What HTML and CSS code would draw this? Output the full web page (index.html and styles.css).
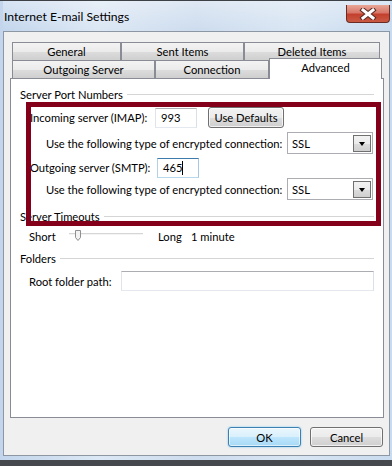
FILE: index.html
```html
<!DOCTYPE html>
<html>
<head>
    <title>Internet E-mail Settings</title>
    <link rel="stylesheet" href="styles.css">
</head>
<body>
    <div class="window">
        <div class="titlebar">
            <span class="title">Internet E-mail Settings</span>
            <span class="close-button">
                <svg width="18" height="12" viewBox="0 0 18 12">
                    <path d="M4 2 L14 10 M14 2 L4 10" stroke="#5a2a24" stroke-width="5" stroke-linecap="square"/>
                    <path d="M4 2 L14 10 M14 2 L4 10" stroke="#ffffff" stroke-width="3" stroke-linecap="square"/>
                </svg>
            </span>
        </div>
        <div class="client">
            <div class="tabs">
                <div class="tab-row">
                    <div class="tab tab-general">General</div>
                    <div class="tab tab-sent">Sent Items</div>
                    <div class="tab tab-deleted">Deleted Items</div>
                </div>
                <div class="tab-row front-row">
                    <div class="tab tab-outgoing">Outgoing Server</div>
                    <div class="tab tab-connection">Connection</div>
                    <div class="tab tab-advanced selected">Advanced</div>
                </div>
            </div>

            <div class="panel">
                <div class="group-title first"><span>Server Port Numbers</span></div>

                <div class="row row-incoming">
                    <span class="label label-incoming">Incoming server (IMAP):</span>
                    <span class="textbox port">993</span>
                    <span class="button defaults-button">Use Defaults</span>
                </div>
                <div class="row row-encrypt first-encrypt">
                    <span class="label label-encrypt">Use the following type of encrypted connection:</span>
                    <span class="combo">
                        <span class="combo-text">SSL</span>
                        <span class="combo-arrow"></span>
                    </span>
                </div>
                <div class="row row-outgoing">
                    <span class="label label-outgoing">Outgoing server (SMTP):</span>
                    <span class="textbox port focused">465<span class="caret"></span></span>
                </div>
                <div class="row row-encrypt">
                    <span class="label label-encrypt">Use the following type of encrypted connection:</span>
                    <span class="combo">
                        <span class="combo-text">SSL</span>
                        <span class="combo-arrow"></span>
                    </span>
                </div>

                <div class="group-title timeouts-title"><span>Server Timeouts</span></div>
                <div class="row row-timeout">
                    <span class="label label-short">Short</span>
                    <span class="slider">
                        <svg width="74" height="12" viewBox="0 0 74 12">
                            <rect x="0" y="3" width="74" height="2" fill="#d6d6d6"/>
                            <rect x="0" y="4" width="74" height="1" fill="#f4f4f4"/>
                            <path d="M6.5 0.5 H11.5 V7.5 L9 10.5 L6.5 7.5 Z" fill="#f2f2f2" stroke="#8f8f8f"/>
                        </svg>
                    </span>
                    <span class="label label-long">Long</span>
                    <span class="label">1 minute</span>
                </div>

                <div class="group-title folders-title"><span>Folders</span></div>
                <div class="row row-folder">
                    <span class="label label-root">Root folder path:</span>
                    <span class="textbox path"></span>
                </div>

                <div class="highlight"></div>
            </div>

            <div class="buttons">
                <span class="button ok-button">OK</span>
                <span class="button">Cancel</span>
            </div>
        </div>
    </div>
</body>
</html>
```

FILE: styles.css
```css
body {
    margin: 0;
    width: 392px;
    height: 466px;
    overflow: hidden;
    font-family: Lato, "Liberation Sans", sans-serif;
    font-size: 11.2px;
    color: #000;
    background: #45484d;
}
.window {
    height: 460px;
    box-sizing: border-box;
    display: flex;
    flex-direction: column;
    padding: 0 2px 4px 3px;
    border-top: 1px solid #3d4146;
    background: linear-gradient(to right, #c2d5ec 0%, #dbe7f4 25%, #cddcee 50%, #d8e5f3 75%, #c9dbef 100%);
}
.titlebar {
    height: 30px;
    display: flex;
    align-items: flex-start;
    background: linear-gradient(to bottom, rgba(255,255,255,0.35), rgba(255,255,255,0));
}
.title {
    padding-left: 1px;
    line-height: 32px;
    font-size: 12.2px;
}
.close-button {
    margin-left: auto;
    margin-top: 4px;
    width: 44px;
    height: 18px;
    box-sizing: border-box;
    display: flex;
    align-items: center;
    justify-content: center;
    border: 1px solid #6b2b22;
    border-top: none;
    border-radius: 0 0 4px 4px;
    background: linear-gradient(to bottom, #e8a696 0%, #d7786a 45%, #c4402e 55%, #c85a44 100%);
}
.client {
    flex: 1;
    display: flex;
    flex-direction: column;
    border: 1px solid #8d97a3;
    background-color: #f0f0f0;
    padding: 10px 5px 8px 6px;
}
.tabs {
    margin-left: 2px;
}
.tab-row {
    display: flex;
    height: 18px;
}
.front-row {
    align-items: flex-end;
}
.tab {
    height: 18px;
    box-sizing: border-box;
    border: 1px solid #898c95;
    border-bottom: none;
    text-align: center;
    line-height: 18px;
    background: linear-gradient(to bottom, #f3f3f3 0%, #ebebeb 50%, #dddddd 50%, #cfcfcf 100%);
}
.tab-general { width: 109px; }
.tab-sent { width: 123px; }
.tab-deleted { width: 136px; }
.tab-outgoing { width: 143px; }
.tab-connection { width: 114px; }
.tab-advanced { width: 113px; }
.tab.selected {
    position: relative;
    z-index: 2;
    height: 21px;
    margin-bottom: -1px;
    background: #fff;
    line-height: 17px;
}
.panel {
    flex: 1;
    position: relative;
    background: #fff;
    border: 1px solid #898c95;
    padding: 7px 9px 0 9px;
}
.group-title {
    display: flex;
    align-items: center;
    height: 16px;
}
.group-title::after {
    content: "";
    flex: 1;
    height: 1px;
    margin-left: 4px;
    background-color: #d5d5d5;
}
.timeouts-title { margin-top: 8px; }
.folders-title { margin-top: 6px; }
.row {
    display: flex;
    align-items: center;
    white-space: nowrap;
}
.row-incoming {
    height: 21px;
    margin-top: 5px;
    padding-left: 10px;
}
.row-outgoing {
    height: 21px;
    margin-top: 3px;
    padding-left: 10px;
}
.row-encrypt {
    height: 22px;
    padding-left: 26px;
}
.first-encrypt { margin-top: 4px; }
.row-timeout {
    height: 16px;
    margin-top: 4px;
    padding-left: 9px;
}
.row-folder {
    height: 20px;
    margin-top: 5px;
    padding-left: 9px;
}
.label-incoming { width: 125px; }
.label-outgoing { width: 127px; }
.label-encrypt { width: 241px; }
.label-short { width: 40px; }
.label-long { width: 33px; margin-left: 15px; }
.label-root { width: 92px; }
.slider {
    width: 74px;
    height: 12px;
    display: flex;
}
.textbox {
    height: 20px;
    box-sizing: border-box;
    display: flex;
    align-items: center;
    border: 1px solid;
    border-color: #abadb3 #dbdfe6 #e3e9ef #e2e3ea;
    background: #fff;
}
.port {
    width: 42px;
    padding-left: 5px;
}
.focused {
    border-color: #3d7bad #a4c9e3 #b7d9ed #b5cfe7;
}
.caret {
    width: 1px;
    height: 14px;
    background: #000;
}
.path {
    width: 253px;
}
.combo {
    width: 86px;
    height: 22px;
    box-sizing: border-box;
    display: flex;
    align-items: center;
    border: 1px solid #abadb3;
    background: #fff;
    padding: 1px;
}
.combo-text {
    flex: 1;
    padding-left: 3px;
}
.combo-arrow {
    width: 18px;
    height: 17px;
    box-sizing: border-box;
    display: flex;
    align-items: center;
    justify-content: center;
    border: 1px solid #707070;
    background: linear-gradient(to bottom, #f2f2f2 0%, #ebebeb 50%, #dddddd 50%, #cfcfcf 100%);
}
.combo-arrow::after {
    content: "";
    margin-top: 2px;
    border-left: 3px solid transparent;
    border-right: 3px solid transparent;
    border-top: 4px solid #000;
}
.button {
    height: 21px;
    box-sizing: border-box;
    display: flex;
    align-items: center;
    justify-content: center;
    border: 1px solid #707070;
    border-radius: 3px;
    background: linear-gradient(to bottom, #f2f2f2 0%, #ebebeb 50%, #dddddd 50%, #cfcfcf 100%);
    box-shadow: inset 0 0 0 1px rgba(255,255,255,0.7);
}
.defaults-button {
    width: 76px;
    margin-left: 11px;
}
.highlight {
    position: absolute;
    left: 15px;
    top: 23px;
    width: 355px;
    height: 124px;
    box-sizing: border-box;
    border: 5px solid #84001a;
}
.buttons {
    display: flex;
    justify-content: flex-end;
    gap: 9px;
    margin-top: 9px;
    padding-right: 1px;
}
.buttons .button {
    width: 73px;
    height: 20px;
}
.buttons .ok-button {
    border-color: #3c7fb1;
    background: linear-gradient(to bottom, #eaf6fd 0%, #d9f0fc 50%, #bee6fd 50%, #a7d9f5 100%);
    box-shadow: inset 0 0 0 1px rgba(255,255,255,0.6), 0 0 2px #6fc3f0;
}
```
